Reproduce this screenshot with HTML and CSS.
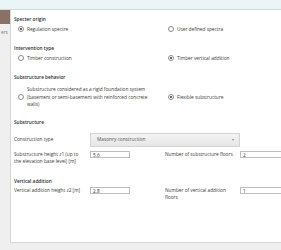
FILE: index.html
```html
<!DOCTYPE html>
<html lang="en">
<head>
    <meta charset="UTF-8">
    <title>Seismic settings</title>
    <link rel="stylesheet" href="styles.css">
</head>
<body>
    <div class="topbar"></div>
    <div class="workspace">
        <aside class="sidebar">
            <div class="sidebar-tab"></div>
            <div class="sidebar-label">ers</div>
        </aside>

        <main class="panel">
            <!-- Specter origin -->
            <section class="section">
                <div class="section-title">Specter origin</div>
                <div class="options">
                    <label class="option"><span class="radio checked"></span>Regulation spectre</label>
                    <label class="option"><span class="radio"></span>User defined spectra</label>
                </div>
            </section>

            <!-- Intervention type -->
            <section class="section">
                <div class="section-title">Intervention type</div>
                <div class="options">
                    <label class="option"><span class="radio"></span>Timber construction</label>
                    <label class="option"><span class="radio checked"></span>Timber vertical addition</label>
                </div>
            </section>

            <!-- Substructure behavior -->
            <section class="section section-tight">
                <div class="section-title">Substructure behavior</div>
                <div class="options options-tall">
                    <label class="option"><span class="radio"></span><span class="option-text">Substructure considered as a rigid foundation system (basement or semi-basement with reinforced concrete walls)</span></label>
                    <label class="option"><span class="radio checked"></span>Flexible substructure</label>
                </div>
            </section>

            <!-- Substructure -->
            <section class="section">
                <div class="section-title">Substructure</div>
                <div class="form-grid form-grid-select">
                    <div class="field-label">Construction type</div>
                    <div class="select">
                        <span>Masonry construction</span>
                        <span class="select-arrow">&#9662;</span>
                    </div>

                    <div class="field-label">Substructure height z1 (up to<br>the elevation base level) [m]</div>
                    <div class="input">5.6</div>
                    <div class="field-label right">Number of substructure floors</div>
                    <div class="input">2</div>
                </div>
            </section>

            <!-- Vertical addition -->
            <section class="section">
                <div class="section-title">Vertical addition</div>
                <div class="form-grid">
                    <div class="field-label">Vertical addition height z2 [m]</div>
                    <div class="input">2.8</div>
                    <div class="field-label right">Number of vertical addition floors</div>
                    <div class="input">1</div>
                </div>
            </section>
        </main>
    </div>
</body>
</html>
```

FILE: styles.css
```css
body {
    font-family: 'Open Sans', 'Noto Sans', sans-serif;
    font-size: 4.75px;
    line-height: 7.5px;
    margin: 0;
    color: #3a3a3a;
    background-color: #efefef;
    overflow: hidden;
    width: 281px;
    height: 250px;
}

.topbar {
    height: 9px;
    background-color: #eaf5f7;
    border-bottom: 1px solid #d5d9dc;
}

.workspace {
    display: flex;
    height: 233px;
}

.sidebar {
    width: 10px;
    flex-shrink: 0;
    background-color: #efefef;
    overflow: hidden;
}

.sidebar-tab {
    height: 14px;
    background-color: #8a7165;
}

.sidebar-label {
    margin-top: 5px;
    padding-left: 1px;
    color: #777;
    white-space: nowrap;
}

.panel {
    width: 300px;
    flex-shrink: 0;
    background-color: #fff;
    border-left: 1px solid #d8d8d8;
    border-bottom: 1px solid #d8d8d8;
    padding: 5px 0 0 3px;
    box-sizing: border-box;
}

.section {
    margin-bottom: 11px;
}

.section-tight {
    margin-bottom: 9.5px;
}

.section-title {
    font-weight: 600;
    line-height: 8px;
    color: #2b2b2b;
    margin-bottom: 2px;
}

.options {
    display: grid;
    grid-template-columns: 150px 120px;
    padding-left: 4px;
    line-height: 8px;
}

.options-tall {
    margin-top: 5px;
    line-height: 7.5px;
}

.option {
    display: flex;
    align-items: center;
}

.option-text {
    width: 124px;
}

.radio {
    width: 4px;
    height: 4px;
    border: 0.6px solid #8c8c8c;
    border-radius: 50%;
    margin-right: 3px;
    flex-shrink: 0;
    display: flex;
    align-items: center;
    justify-content: center;
    background-color: #fff;
}

.radio.checked::after {
    content: '';
    width: 2.2px;
    height: 2.2px;
    border-radius: 50%;
    background-color: #333;
}

.form-grid {
    display: grid;
    grid-template-columns: 76px 40px 35px 75px 60px;
    row-gap: 4px;
    align-items: start;
}

.form-grid-select {
    margin-top: 6.5px;
}

.field-label {
    grid-column: 1;
}

.field-label.right {
    grid-column: 4;
    padding-right: 6px;
}

.select {
    grid-column: 2 / 5;
    height: 14px;
    display: flex;
    align-items: center;
    justify-content: space-between;
    padding: 0 5px 0 6px;
    background: linear-gradient(#f4f4f4, #e6e6e6);
    border: 1px solid #d3d3d3;
    box-sizing: border-box;
    color: #555;
}

.form-grid-select .field-label:first-child {
    align-self: center;
}

.select-arrow {
    font-size: 3.5px;
    color: #888;
}

.input {
    height: 7px;
    line-height: 6px;
    margin-top: 0.25px;
    border: 0.6px solid #bdbdbd;
    box-sizing: border-box;
    padding-left: 2px;
    background-color: #fff;
    color: #333;
}
```
